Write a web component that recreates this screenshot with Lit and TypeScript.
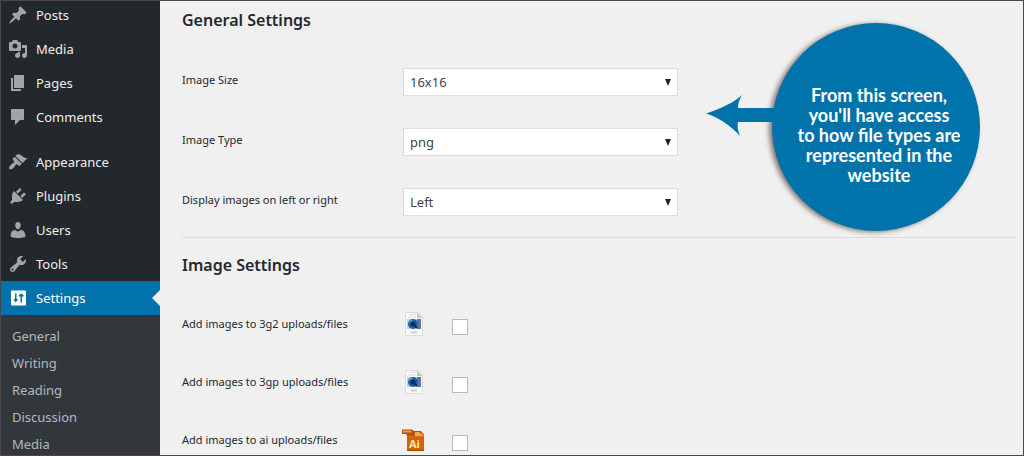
import { LitElement, html, css, svg } from "lit";
import { customElement, property } from "lit/decorators.js";

const ICONS: Record<string, string> = {
  posts:
    "M10.44 3.02l1.82-1.82 6.36 6.35-1.83 1.82c-1.05-.68-2.48-.57-3.41.36l-.75.75c-.92.93-1.04 2.35-.35 3.41l-1.83 1.82-2.41-2.41-2.8 2.79c-.42.42-3.38 2.71-3.8 2.29s1.86-3.39 2.28-3.81l2.79-2.79L4.1 9.36l1.83-1.82c1.05.69 2.48.57 3.4-.36l.75-.75c.93-.92 1.05-2.35.36-3.41z",
  media:
    "M13 11V4c0-.55-.45-1-1-1h-1.67L9 1H5L3.67 3H2c-.55 0-1 .45-1 1v7c0 .55.45 1 1 1h10c.55 0 1-.45 1-1zM7 4.5c1.38 0 2.5 1.12 2.5 2.5S8.38 9.5 7 9.5 4.5 8.38 4.5 7 5.62 4.5 7 4.5zM14 6h5v10.5c0 1.38-1.12 2.5-2.5 2.5S14 17.88 14 16.5s1.12-2.5 2.5-2.5c.17 0 .34.02.5.05V9h-3V6zm-4 8.05V13h2v3.5c0 1.38-1.12 2.5-2.5 2.5S7 17.88 7 16.5 8.12 14 9.5 14c.17 0 .34.02.5.05z",
  pages: "M6 15V2h10v13H6zm-1 1h8v2H3V5h2v11z",
  comments: "M4 2h11c.55 0 1 .45 1 1v9c0 .55-.45 1-1 1h-3l-5 5v-5H4c-.55 0-1-.45-1-1V3c0-.55.45-1 1-1z",
  appearance:
    "M14.48 11.06L7.41 3.99l1.5-1.5c.5-.56 2.3-.47 3.51.32 1.21.8 1.43 1.28 2.91 2.1 1.18.64 2.45 1.26 4.45.85zm-.71.71L6.7 4.7 4.93 6.47c-.39.39-.39 1.02 0 1.41l1.06 1.06c.39.39.39 1.03 0 1.42-.6.6-1.43 1.11-2.21 1.69-.35.26-.7.53-1.01.84C1.43 14.23.4 16.08 1.4 17.07c.99 1 2.84-.03 4.18-1.36.31-.31.58-.66.85-1.02.57-.78 1.08-1.61 1.69-2.21.39-.39 1.02-.39 1.41 0l1.06 1.06c.39.39 1.02.39 1.41 0z",
  plugins:
    "M13.11 4.36L9.87 7.6 8 5.73l3.24-3.24c.35-.34 1.05-.2 1.56.32.52.51.66 1.21.31 1.55zm-8 1.77l.91-1.12 9.01 9.01-1.19.84c-.71.71-2.63 1.16-3.82 1.16H6.14L4.9 17.26c-.59.59-1.54.59-2.12 0-.59-.58-.59-1.53 0-2.12l1.24-1.24v-3.88c0-1.13.4-3.19 1.09-3.89zm7.26 3.97l3.24-3.24c.34-.35 1.04-.21 1.55.31.52.51.66 1.21.31 1.55l-3.24 3.25z",
  users:
    "M10 9.25c-2.27 0-2.73-3.44-2.73-3.44C7 4.02 7.82 2 9.97 2c2.16 0 2.98 2.02 2.71 3.81 0 0-.41 3.44-2.68 3.44zm0 2.57L12.72 10c2.39 0 4.52 2.33 4.52 4.53v2.49s-3.65 1.13-7.24 1.13c-3.65 0-7.24-1.13-7.24-1.13v-2.49c0-2.25 1.94-4.48 4.47-4.48z",
  tools:
    "M16.68 9.77c-1.34 1.34-3.3 1.67-4.95.99l-5.41 6.52c-.99.99-2.59.99-3.58 0s-.99-2.59 0-3.57l6.52-5.42c-.68-1.65-.35-3.61.99-4.95 1.28-1.28 3.12-1.62 4.72-1.06l-2.89 2.89 2.82 2.82 2.86-2.87c.53 1.58.18 3.39-1.08 4.65zM3.81 16.21c.4.39 1.04.39 1.43 0 .4-.4.4-1.04 0-1.43-.39-.4-1.03-.4-1.43 0-.39.39-.39 1.03 0 1.43z",
  settings:
    "M18 16.5V3.500c0-.55-.45-1-1-1H4c-.55 0-1 .45-1 1v13c0 .55.45 1 1 1h13c.55 0 1-.45 1-1zM7 5.500h1.500V11H10.200L7.750 14.500 5.300 11H7zM12.500 14.500V8.500H10.800V7.200L13.250 5.500 15.700 7.200V8.500H14V14.500z",
};

const MENU_GROUPS = [
  ["Posts", "Media", "Pages", "Comments"],
  ["Appearance", "Plugins", "Users", "Tools", "Settings"],
];

const SUBMENU = ["General", "Writing", "Reading", "Discussion", "Media"];

const CHOICES = [
  { id: "image-size", label: "Image Size", options: ["16x16", "32x32", "48x48"] },
  { id: "image-type", label: "Image Type", options: ["png", "gif"] },
  { id: "image-side", label: "Display images on left or right", options: ["Left", "Right"] },
];

const FILE_TYPES = [
  { ext: "3g2", kind: "video" },
  { ext: "3gp", kind: "video" },
  { ext: "ai", kind: "ai" },
];

@customElement("admin-menu")
export class AdminMenu extends LitElement {
  @property() current = "Settings";

  static styles = css`
    :host {
      display: block;
      overflow: hidden;
      background: #23282d;
      font-size: 13px;
    }
    .menu {
      display: flex;
      flex-direction: column;
      gap: 11px;
      margin-top: -3px;
    }
    ul {
      list-style: none;
      margin: 0;
      padding: 0;
    }
    .item {
      display: flex;
      align-items: center;
      gap: 8px;
      height: 34px;
      padding-left: 7px;
      color: #eee;
      text-decoration: none;
    }
    .icon {
      width: 20px;
      height: 20px;
      fill: #a0a5aa;
    }
    .current {
      background: #0073aa;
      color: #fff;
    }
    .current .icon {
      fill: #fff;
    }
    .current::after {
      content: "";
      margin-left: auto;
      border: 8px solid transparent;
      border-right-color: #f0f0f0;
      border-left-width: 0;
    }
    .submenu {
      padding: 8px 0;
      background: #32373c;
    }
    .sub {
      display: block;
      padding-left: 11px;
      line-height: 27px;
      color: #b4b9be;
      text-decoration: none;
    }
  `;

  private item(name: string) {
    const active = name === this.current;
    return html`<li>
      <a class="item ${active ? "current" : ""}" href="#">
        <svg class="icon" viewBox="0 0 20 20" aria-hidden="true">
          <path fill-rule="evenodd" d=${ICONS[name.toLowerCase()]} />
        </svg>
        <span>${name}</span>
      </a>
      ${active
        ? html`<ul class="submenu">
            ${SUBMENU.map((s) => html`<li><a class="sub" href="#">${s}</a></li>`)}
          </ul>`
        : ""}
    </li>`;
  }

  render() {
    return html`<nav class="menu">
      ${MENU_GROUPS.map((group) => html`<ul>${group.map((n) => this.item(n))}</ul>`)}
    </nav>`;
  }
}

@customElement("file-icon")
export class FileIcon extends LitElement {
  @property() kind = "video";

  static styles = css`
    :host {
      display: block;
      width: 24px;
      height: 24px;
    }
    svg {
      display: block;
      width: 24px;
      height: 24px;
    }
    .tag {
      font: bold 11px "Noto Sans", sans-serif;
      fill: #ffe9a8;
    }
  `;

  private video() {
    return svg`
      <path d="M3.500 .5h13l4 4v19h-17z" fill="#f8f8f8" stroke="#dcdcdc"/>
      <path d="M15 .5l5.500 5.500H15z" fill="#c4c4c4"/>
      <path d="M8 2.500h6M6 5h8" stroke="#dedede"/>
      <rect x="5" y="7" width="14" height="10" fill="#b9d3ea"/>
      <path d="M15 7h4v10h-4z" fill="#5b7896"/>
      <circle cx="11" cy="12" r="5" fill="#1d62a8"/>
      <circle cx="11" cy="12" r="2.500" fill="#0d2f5e"/>
      <path d="M11.500 12l3.500 4" stroke="#0d2f5e" stroke-width="2"/>
      <path d="M7.500 10.500a4 4 0 0 1 3-2.500" stroke="#8fc4ee" fill="none"/>
      <path d="M9 20.500h6" stroke="#d0d0d0" stroke-width="2"/>`;
  }

  private ai() {
    return svg`
      <path d="M5 3h14l3 3v17H5z" fill="#d9760f"/>
      <path d="M5 9h17v14H5z" fill="#cf6406"/>
      <path d="M0 1.500h10l2 1.500h7v5H5L4 6H0z" fill="#b4510c"/>
      <path d="M1 2.500h8l1 2H1z" fill="#ee9a4a"/>
      <path d="M13 4h4l4 4h-8z" fill="#f0a85c"/>
      <path d="M5.500 22.500h16" stroke="#9b4703"/>
      <text class="tag" x="7" y="20">Ai</text>`;
  }

  render() {
    return html`<svg viewBox="0 0 24 24" aria-hidden="true">
      ${this.kind === "ai" ? this.ai() : this.video()}
    </svg>`;
  }
}

@customElement("help-callout")
export class HelpCallout extends LitElement {
  static styles = css`
    :host {
      display: flex;
      align-items: flex-start;
    }
    .arrow {
      width: 72px;
      height: 42px;
      margin: 72px -6px 0 0;
      fill: #0073aa;
      z-index: 1;
    }
    .bubble {
      box-sizing: border-box;
      display: grid;
      place-items: center;
      width: 208px;
      height: 208px;
      padding: 16px 12px 0 18px;
      border-radius: 50%;
      background: #0073aa;
      box-shadow: -3px 1px 5px rgba(60, 40, 30, 0.6);
      color: #fff;
      font: bold 18px/20px Lato, sans-serif;
      text-align: center;
    }
    p {
      margin: 0;
      white-space: nowrap;
    }
  `;

  render() {
    return html`
      <svg class="arrow" viewBox="0 0 72 42" aria-hidden="true">
        <path d="M0 18.500C14 14 27 8 36 0C33 5 32 9 32 13H72V27H32C31 32 32 36 34 41C25 31 14 23 0 18.500z" />
      </svg>
      <div class="bubble">
        <p>From this screen,<br />you'll have access<br />to how file types are<br />represented in the<br />website</p>
      </div>
    `;
  }
}

@customElement("app-root")
export class AppRoot extends LitElement {
  static styles = css`
    :host {
      box-sizing: border-box;
      display: grid;
      grid-template-columns: 159px 1fr;
      height: 100vh;
      overflow: hidden;
      border: 1px solid #4b474b;
      background: #f0f0f0;
      color: #23282d;
      font-family: "Noto Sans", sans-serif;
    }
    main {
      position: relative;
      overflow: hidden;
      padding: 7px 7px 0 22px;
    }
    h2 {
      margin: 0;
      font-size: 16px;
      line-height: 24px;
      font-weight: 600;
    }
    .row {
      display: grid;
      grid-template-columns: 221px 1fr;
    }
    .choices {
      padding: 36px 0 21px;
      display: grid;
      gap: 32px;
      border-bottom: 1px solid #dcdcdc;
      margin-bottom: 15px;
    }
    .label {
      font-size: 11px;
      line-height: 24px;
    }
    .select {
      position: relative;
      width: 275px;
    }
    select {
      appearance: none;
      box-sizing: border-box;
      display: block;
      width: 100%;
      height: 28px;
      padding: 0 6px;
      border: 1px solid #ddd;
      border-radius: 0;
      background: #fff;
      color: #444;
      font: 13px "Noto Sans", sans-serif;
    }
    .caret {
      position: absolute;
      right: 6px;
      top: 11px;
      width: 8px;
      height: 7px;
      fill: #222;
      pointer-events: none;
    }
    .types {
      display: grid;
      gap: 34px;
      padding-top: 35px;
    }
    .toggle {
      display: flex;
      align-items: center;
      gap: 26px;
    }
    input {
      appearance: none;
      box-sizing: border-box;
      width: 16px;
      height: 16px;
      margin: 5px 0 0;
      border: 1px solid #b4b9be;
      background: #fff;
    }
    .types file-icon {
      margin-left: -1px;
    }
    .callout {
      position: absolute;
      top: 22px;
      right: 43px;
    }
  `;

  render() {
    return html`
      <admin-menu></admin-menu>
      <main>
        <h2>General Settings</h2>
        <div class="choices">
          ${CHOICES.map(
            (c) => html`<div class="row">
              <label class="label" for=${c.id}>${c.label}</label>
              <div class="select">
                <select id=${c.id}>
                  ${c.options.map((o) => html`<option>${o}</option>`)}
                </select>
                <svg class="caret" viewBox="0 0 8 7" aria-hidden="true"><path d="M1 0h6L4 7z" /></svg>
              </div>
            </div>`
          )}
        </div>
        <h2>Image Settings</h2>
        <div class="types">
          ${FILE_TYPES.map(
            (f) => html`<div class="row">
              <label class="label" for=${f.ext}>Add images to ${f.ext} uploads/files</label>
              <div class="toggle">
                <file-icon kind=${f.kind}></file-icon>
                <input type="checkbox" id=${f.ext} />
              </div>
            </div>`
          )}
        </div>
        <help-callout class="callout"></help-callout>
      </main>
    `;
  }
}
